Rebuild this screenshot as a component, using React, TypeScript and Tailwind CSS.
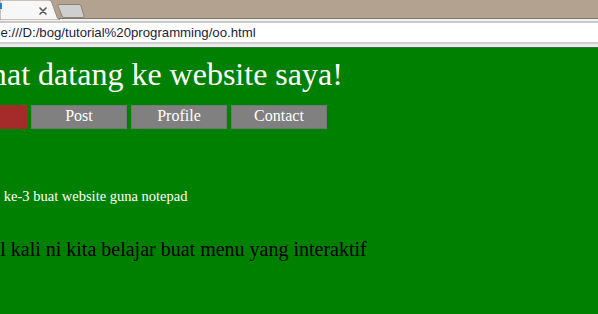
import React from "react";

const menuItems = ["Home", "Post", "Profile", "Contact"];

const BrowserChrome: React.FC = () => {
  return (
    <div className="flex flex-col">
      {/* tab strip */}
      <div className="relative h-[19px] bg-[#b3a290] border-b border-[#847668]">
        <svg
          className="absolute left-0 top-0"
          width="60"
          height="20"
          viewBox="0 0 60 20"
        >
          <path d="M0 0 H49 Q51 0 52 3 L57 17 Q58 19 60 20 H0 Z" fill="#f7f7f7" stroke="#9a8b7c" strokeWidth="1" />
          <rect x="0" y="3" width="2" height="6" fill="#2a7fd4" />
          <path d="M40 8 L46 14 M46 8 L40 14" stroke="#555" strokeWidth="1.6" strokeLinecap="round" />
        </svg>
        <svg
          className="absolute left-[56px] top-[3px]"
          width="30"
          height="16"
          viewBox="0 0 30 16"
        >
          <path d="M2.5 1.5 H23 Q24.5 1.5 25 3 L28 13 Q28.5 14.5 27 14.5 H8 Q6.5 14.5 6 13 L2 3 Q1.5 1.5 2.5 1.5 Z" fill="#cfcfcf" stroke="#8e8174" strokeWidth="1" />
        </svg>
      </div>
      {/* toolbar / address bar */}
      <div className="h-[2px] bg-[#f1f1f1]" />
      <div className="h-[2px] bg-[#c9c9c9]" />
      <div className="h-[19px] bg-white flex items-center overflow-hidden">
        <span className="ml-[-9px] whitespace-nowrap text-[13.2px] leading-[19px] text-[#1c1c3a] font-['Liberation_Sans',Arial,sans-serif]">
          file:///D:/bog/tutorial%20programming/oo.html
        </span>
      </div>
      <div className="h-[2px] bg-[#cfcfcf]" />
      <div className="h-[3px] bg-[#ececec]" />
      <div className="h-[1px] bg-[#3c6b3c]" />
    </div>
  );
};

const App: React.FC = () => {
  return (
    <div className="w-[598px] h-[314px] overflow-hidden bg-[#008000] flex flex-col font-['Liberation_Serif','Times_New_Roman',serif]">
      <BrowserChrome />
      <div className="flex flex-col">
        <h1 className="mt-[8px] ml-[-73px] whitespace-nowrap text-[32px] leading-[36px] text-white">
          Selamat datang ke website saya!
        </h1>
        <ul className="mt-[13px] ml-[-69px] flex gap-[4px]">
          {menuItems.map((item, i) => (
            <li
              key={item}
              className={`w-[96px] h-[24px] text-center text-[16px] leading-[19px] text-white ${
                i === 0 ? "bg-[#a52a2a]" : "bg-[#808080] border border-[#767676]"
              }`}
            >
              {item}
            </li>
          ))}
        </ul>
        <p className="mt-[59px] ml-[-46px] whitespace-nowrap text-[14.5px] leading-[17px] text-white">
          Tutorial ke-3 buat website guna notepad
        </p>
        <p className="mt-[33px] ml-[-107px] whitespace-nowrap text-[20px] leading-[23px] text-black">
          Untuk tutorial kali ni kita belajar buat menu yang interaktif
        </p>
      </div>
    </div>
  );
};

export default App;
